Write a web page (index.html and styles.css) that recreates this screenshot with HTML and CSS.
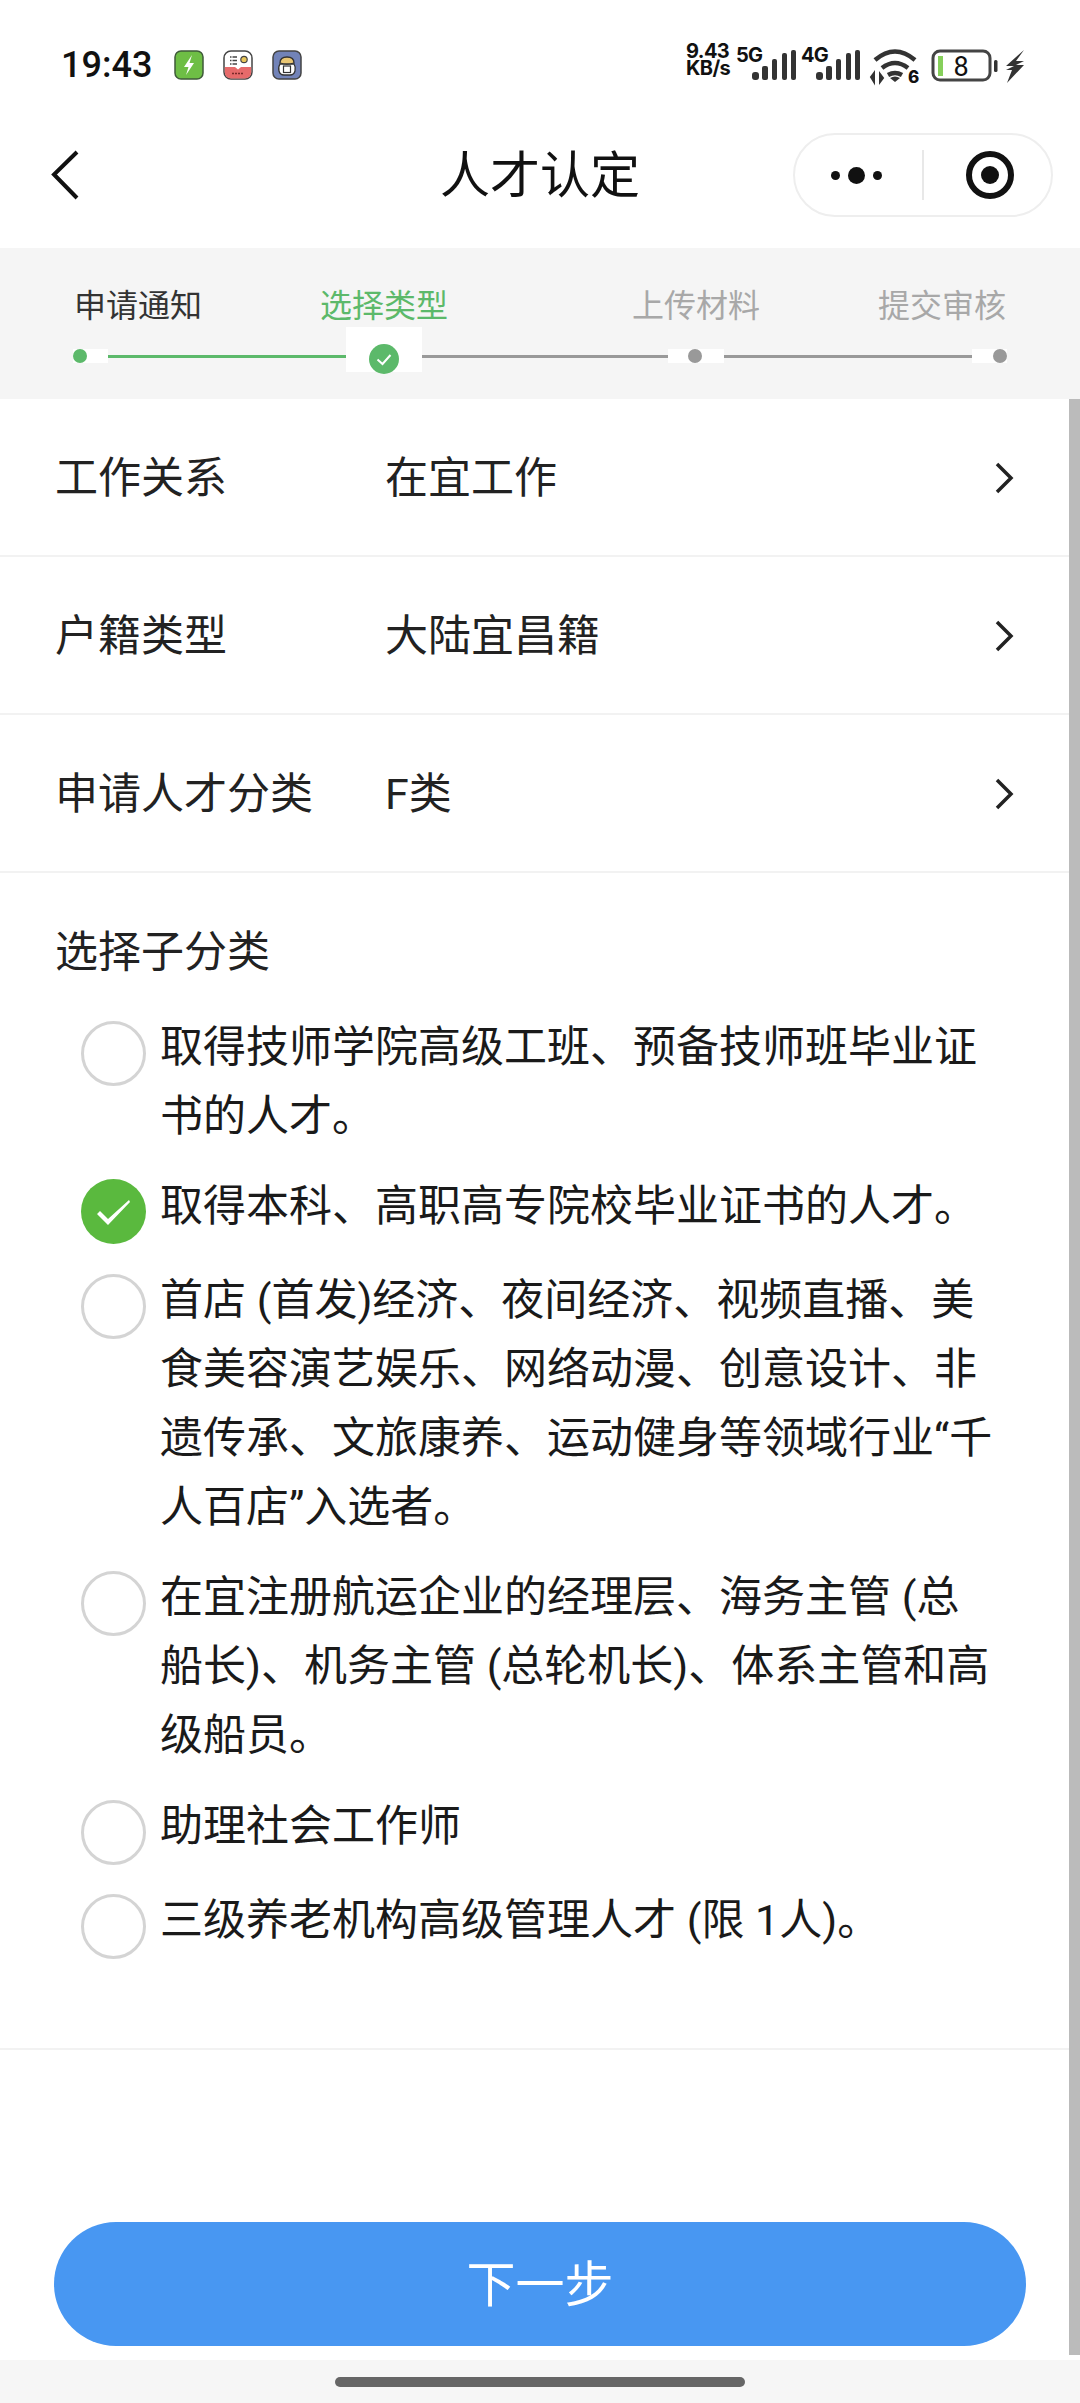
FILE: index.html
```html
<!DOCTYPE html>
<html lang="zh-CN">
<head>
<meta charset="utf-8">
<title>人才认定</title>
<link rel="stylesheet" href="styles.css">
</head>
<body>
<div class="page">
  <header class="status">
    <div class="status-left">
      <span class="time">19:43</span>
      <svg class="app" viewBox="0 0 30 30"><rect x="1" y="1" width="28" height="28" rx="6" fill="#6ebe45" stroke="#3f5a3a" stroke-width="1.5"/><path d="M18 5 10 17h4.500l-2.500 8 8-12h-4.500z" fill="#fff"/></svg>
      <svg class="app" viewBox="0 0 30 30"><rect x="1" y="1" width="28" height="28" rx="7" fill="#fff" stroke="#444" stroke-width="1.500"/><path d="M1.800 17H12l3 2.500L18 17h10.200v5.500a6 6 0 0 1-6 6H7.800a6 6 0 0 1-6-6z" fill="#e66a6a"/><path d="M7 7h7M7 10.500h7M7 14h7" stroke="#444" stroke-width="1.300" stroke-dasharray="1.500 1 8"/><circle cx="21" cy="9.500" r="3.200" fill="#e8c65a" stroke="#444" stroke-width="1.200"/><path d="M9 23.500h12" stroke="#7a2a2a" stroke-width="1.500" stroke-dasharray="2 1"/></svg>
      <svg class="app" viewBox="0 0 30 30"><rect x="1" y="1" width="28" height="28" rx="6" fill="#7283b8" stroke="#444" stroke-width="1.500"/><path d="M8 14q-2 3-1 7 1 4 5 4h6q4 0 5-4 1-4-1-7z" fill="#fff" stroke="#333" stroke-width="1.300"/><path d="M8 13q0-6 7-6t7 6q-7 2-14 0z" fill="#eac774" stroke="#333" stroke-width="1.300"/><rect x="11.500" y="16" width="7" height="6.500" fill="none" stroke="#333" stroke-width="1.200"/></svg>
    </div>
    <div class="status-right">
      <div class="speed">9.43<br>KB/s</div>
      <svg class="indicators" viewBox="50 -6 295 52" aria-label="status">
        <g font-family="Inter, Roboto, sans-serif" font-weight="700" fill="#111">
          <text x="50" y="17" font-size="20" letter-spacing="-.8">5G</text>
          <text x="115" y="17" font-size="20" letter-spacing="-.8">4G</text>
        </g>
        <g fill="#333">
          <rect x="66" y="27" width="7" height="8" rx="3"/><rect x="76" y="21" width="6" height="14" rx="2"/><rect x="86" y="14" width="5" height="21" rx="2"/><rect x="96" y="8" width="5" height="27" rx="2"/><rect x="105" y="5" width="5" height="30" rx="2"/>
          <rect x="130" y="27" width="7" height="8" rx="3"/><rect x="140" y="21" width="6" height="14" rx="2"/><rect x="150" y="14" width="5" height="21" rx="2"/><rect x="160" y="8" width="5" height="27" rx="2"/><rect x="169" y="5" width="5" height="30" rx="2"/>
        </g>
        <g fill="none" stroke="#333" stroke-width="4.500">
          <path d="M189 15q20-17 40 0"/><path d="M196 23q13-10 26 0"/><path d="M202 30q7-4 14 0"/>
        </g>
        <path d="M204 33q5-3 10 0l-5 4z" fill="#333"/>
        <path d="M188 37v-8M185 32l3-4v9zM194 29v8l3-4z" stroke="#333" stroke-width="2" fill="#333"/>
        <text x="222" y="38" font-family="Inter, Roboto, sans-serif" font-size="17" font-weight="800" fill="#111">6</text>
        <rect x="247" y="6" width="57" height="29" rx="7" fill="none" stroke="#444" stroke-width="3"/>
        <rect x="252" y="11" width="5" height="20" fill="#86cf5b"/>
        <text x="275" y="31" text-anchor="middle" font-family="Roboto, sans-serif" font-size="27" fill="#111">8</text>
        <rect x="308" y="15" width="3.500" height="12" rx="1.500" fill="#333"/>
        <path d="M338 5 320 21h8l-8 4h6l-5 13 17-18h-8l8-4h-8z" fill="#333"/>
      </svg>
    </div>
  </header>

  <nav class="nav">
    <svg class="back" viewBox="0 0 30 52"><path d="M27 3 4 25.500 27 49" fill="none" stroke="#111" stroke-width="4"/></svg>
    <h1 class="title">人才认定</h1>
    <div class="capsule">
      <div class="dots"><i class="dot"></i><i class="dot dot-big"></i><i class="dot"></i></div>
      <span class="capsule-sep"></span>
      <span class="target"><i></i></span>
    </div>
  </nav>

  <section class="stepper">
    <div class="labels">
      <span class="label l1">申请通知</span>
      <span class="label l2">选择类型</span>
      <span class="label l3">上传材料</span>
      <span class="label l4">提交审核</span>
    </div>
    <div class="track">
      <div class="node node-first"><i class="pt pt-green"></i></div>
      <div class="seg seg-green seg-a"></div>
      <div class="node node-current">
        <svg viewBox="0 0 30 30" class="cur"><circle cx="15" cy="15" r="15" fill="#5cb96a"/><path d="M8.500 15.500l5 4.500 8-9" fill="none" stroke="#fff" stroke-width="2"/></svg>
      </div>
      <div class="seg seg-b"></div>
      <div class="node node-mid"><i class="pt"></i></div>
      <div class="seg seg-c"></div>
      <div class="node node-last"><i class="pt"></i></div>
    </div>
  </section>

  <main class="form">
    <div class="row"><span class="row-key">工作关系</span><span class="row-val">在宜工作</span><svg class="chev" viewBox="0 0 20 32"><path d="M3 2l14 14L3 30" fill="none" stroke="#222" stroke-width="3.500"/></svg></div>
    <div class="row"><span class="row-key">户籍类型</span><span class="row-val">大陆宜昌籍</span><svg class="chev" viewBox="0 0 20 32"><path d="M3 2l14 14L3 30" fill="none" stroke="#222" stroke-width="3.500"/></svg></div>
    <div class="row"><span class="row-key">申请人才分类</span><span class="row-val">F类</span><svg class="chev" viewBox="0 0 20 32"><path d="M3 2l14 14L3 30" fill="none" stroke="#222" stroke-width="3.500"/></svg></div>

    <section class="sub">
      <h2 class="sub-title">选择子分类</h2>
      <ul class="opts">
        <li class="opt"><span class="radio"></span><p>取得技师学院高级工班、预备技师班毕业证书的人才。</p></li>
        <li class="opt"><svg class="radio-on" viewBox="0 0 65 65"><circle cx="32.500" cy="32.500" r="32.500" fill="#5ab93e"/><path d="M16 35l3-3 8 8L48 21l1 2L27 46z" fill="#fff"/></svg><p>取得本科、高职高专院校毕业证书的人才。</p></li>
        <li class="opt"><span class="radio"></span><p>首店 (首发)经济、夜间经济、视频直播、美食美容演艺娱乐、网络动漫、创意设计、非遗传承、文旅康养、运动健身等领域行业“千人百店”入选者。</p></li>
        <li class="opt"><span class="radio"></span><p>在宜注册航运企业的经理层、海务主管 (总船长)、机务主管 (总轮机长)、体系主管和高级船员。</p></li>
        <li class="opt"><span class="radio"></span><p>助理社会工作师</p></li>
        <li class="opt"><span class="radio"></span><p>三级养老机构高级管理人才 (限 1人)。</p></li>
      </ul>
    </section>

    <div class="foot">
      <button class="next" type="button">下一步</button>
    </div>
    <div class="scrollbar"></div>
  </main>

  <div class="home"><span class="home-bar"></span></div>
</div>
</body>
</html>
```
FILE: styles.css
```css
* { box-sizing: border-box; }
html, body { margin: 0; padding: 0; }
body {
  width: 1080px;
  height: 2403px;
  background: #fff;
  color: #1a1a1a;
  font-family: Roboto, "Noto Sans CJK SC", sans-serif;
  overflow: hidden;
}
.page { display: flex; flex-direction: column; width: 1080px; height: 2403px; }

.status { height: 102px; padding: 28px 0 0 61px; display: flex; align-items: center; }
.status-left { display: flex; align-items: center; }
.time { font-size: 36px; font-weight: 500; color: #111; width: 113px; }
.app { width: 30px; height: 30px; margin-right: 19px; }
.status-right { display: flex; align-items: flex-start; margin-left: auto; margin-right: 49px; height: 52px; }
.speed { width: 50px; padding-top: 4px; font-family: Inter, Roboto, sans-serif; font-weight: 700; font-size: 20px; line-height: 17px; letter-spacing: -.6px; color: #111; white-space: nowrap; }
.indicators { width: 295px; height: 52px; }

.nav { height: 146px; padding: 0 27px; display: grid; grid-template-columns: minmax(0, 1fr) auto minmax(0, 1fr); align-items: center; }
.back { width: 30px; height: 52px; margin-left: 23px; }
.title { margin: 2px 0 0; font-size: 50px; font-weight: 400; color: #111; line-height: 60px; }
.capsule {
  justify-self: end;
  width: 260px; height: 84px;
  border: 2px solid #eee;
  border-radius: 42px;
  display: flex; align-items: center;
  flex: none;
}
.dots { display: flex; align-items: center; gap: 8px; margin-left: 36px; }
.dot { width: 9px; height: 9px; border-radius: 50%; background: #111; }
.dot-big { width: 17px; height: 17px; }
.capsule-sep { width: 2px; height: 50px; background: #e8e8e8; margin-left: 40px; }
.target {
  width: 48px; height: 48px; margin-left: 42px;
  border: 6px solid #111; border-radius: 50%;
  display: flex; align-items: center; justify-content: center;
}
.target i { width: 18px; height: 18px; border-radius: 50%; background: #111; }

.stepper { height: 151px; background: #f5f5f5; padding-top: 37px; }
.labels { display: flex; padding-left: 74px; height: 42px; line-height: 42px; font-size: 32px; }
.label { width: 128px; white-space: nowrap; }
.l1 { color: #333; }
.l2 { color: #5cb96a; margin-left: 118px; }
.l3 { color: #a8a8a8; margin-left: 184px; }
.l4 { color: #a8a8a8; margin-left: 118px; }
.track { display: flex; align-items: flex-start; padding-left: 73px; height: 45px; }
.node { background: #fff; display: flex; }
.node-first { width: 35px; height: 14px; margin-top: 22px; }
.node-current { width: 76px; height: 45px; padding: 17px 0 0 23px; }
.node-mid { width: 56px; height: 14px; margin-top: 22px; padding-left: 20px; }
.node-last { width: 35px; height: 14px; margin-top: 22px; padding-left: 21px; }
.pt { width: 14px; height: 14px; border-radius: 50%; background: #999; }
.pt-green { background: #5cb96a; }
.cur { width: 30px; height: 30px; }
.seg { height: 3px; margin-top: 28px; background: #999; }
.seg-green { background: #5cb96a; }
.seg-a { width: 238px; }
.seg-b { width: 246px; }
.seg-c { width: 248px; }

.form { flex: 1; position: relative; display: flex; flex-direction: column; }
.row {
  height: 158px; padding: 0 66px 7px 55px;
  display: flex; align-items: center;
  border-bottom: 2px solid #f2f2f2;
  font-size: 43px;
}
.row-key { width: 330px; color: #222; }
.row-val { flex: 1; color: #222; }
.chev { width: 20px; height: 32px; margin-top: 9px; }

.sub { height: 1177px; padding: 0 80px 0 55px; border-bottom: 2px solid #f2f2f2; }
.sub-title { margin: 0; font-size: 43px; font-weight: 400; line-height: 60px; padding-top: 49px; height: 140px; color: #222; }
.opts { list-style: none; margin: 0; padding: 0 0 0 26px; display: flex; flex-direction: column; gap: 21.4px; }
.opt { display: flex; align-items: flex-start; }
.opt p { margin: 0; flex: 1; font-size: 43px; line-height: 69px; color: #1a1a1a; }
.radio { flex: none; width: 65px; height: 65px; margin: 8px 14px 0 0; border: 3px solid #d4d4d4; border-radius: 50%; }
.radio-on { flex: none; width: 65px; height: 65px; margin: 7px 14px 0 0; }

.foot { flex: 1; padding: 172px 54px 0; }
.next {
  display: block; width: 972px; height: 124px;
  border: 0; border-radius: 62px;
  background: #4897f2; color: #fff;
  font-family: inherit; font-size: 49px; padding: 0 0 8px;
}
.scrollbar { position: absolute; right: 0; top: 0; width: 11px; height: 1956px; background: #bbb; }
.home { height: 43px; background: #f6f6f6; display: flex; justify-content: center; padding-top: 17px; }
.home-bar { width: 410px; height: 10px; border-radius: 5px; background: #666; }
```
